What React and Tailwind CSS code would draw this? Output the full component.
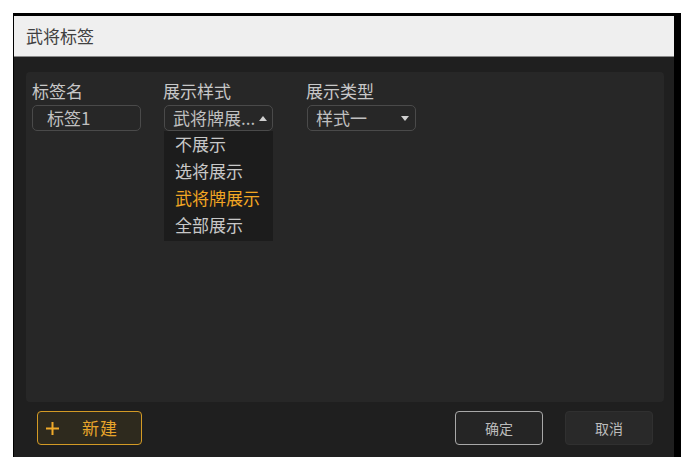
export default function App() {
  const options = ["不展示", "选将展示", "武将牌展示", "全部展示"];
  const font = { fontFamily: '"Noto Sans CJK SC", "Noto Sans", sans-serif' };

  return (
    <div className="h-[471px] w-[694px] bg-white pl-[13px] pt-[13px]" style={font}>
      <div className="flex h-[444px] w-[668px] flex-col border-l border-r-[7px] border-t-[3px] border-black">
        {/* title bar */}
        <div className="flex h-[41px] items-center border-b border-[#8a8a8a] bg-[#efefef] pl-[12px] text-[17px] text-[#404040]">
          武将标签
        </div>

        {/* body */}
        <div className="flex flex-1 flex-col bg-[#1f1f1f] pl-[12px] pr-[10px] pt-[15px]">
          <div className="h-[330px] rounded-[4px] bg-[#272727] pl-[6px] pt-[8px]">
            <div className="flex">
              {/* name */}
              <div className="w-[109px]">
                <div className="text-[17px] leading-[22px] text-[#c8c8c8]">标签名</div>
                <div className="mt-[3px] flex h-[26px] items-center rounded-[5px] border border-[#4a4a4a] pl-[14px] text-[17px] text-[#c0c0c0]">
                  标签1
                </div>
              </div>

              {/* style select (open) */}
              <div className="relative ml-[23px] w-[109px]">
                <div className="-ml-px text-[17px] leading-[22px] text-[#c8c8c8]">展示样式</div>
                <div className="mt-[3px] flex h-[26px] items-center justify-between rounded-[5px] border border-[#4a4a4a] pl-[8px] pr-[5px] text-[17px] text-[#c0c0c0]">
                  <span className="whitespace-nowrap">武将牌展...</span>
                  <svg width="8" height="5" viewBox="0 0 8 5">
                    <path d="M0 5 L4 0 L8 5 Z" fill="#d0d0d0" />
                  </svg>
                </div>
                <div className="absolute left-0 top-[51px] w-[109px] bg-[#1c1c1c] pb-[2px] pl-[11px]">
                  {options.map((o) => (
                    <div
                      key={o}
                      className={
                        "h-[27px] whitespace-nowrap text-[17px] leading-[26px] " +
                        (o === "武将牌展示" ? "text-[#f2a623]" : "text-[#c8c8c8]")
                      }
                    >
                      {o}
                    </div>
                  ))}
                </div>
              </div>

              {/* type select */}
              <div className="ml-[34px] w-[109px]">
                <div className="-ml-px text-[17px] leading-[22px] text-[#c8c8c8]">展示类型</div>
                <div className="mt-[3px] flex h-[26px] items-center justify-between rounded-[5px] border border-[#4a4a4a] pl-[8px] pr-[6px] text-[17px] text-[#c0c0c0]">
                  <span>样式一</span>
                  <svg width="8" height="5" viewBox="0 0 8 5">
                    <path d="M0 0 L8 0 L4 5 Z" fill="#d0d0d0" />
                  </svg>
                </div>
              </div>
            </div>
          </div>

          {/* buttons */}
          <div className="mt-[9px] flex items-center pl-[11px] pr-[11px]">
            <button className="flex h-[34px] w-[105px] items-center rounded-[4px] border border-[#d39a25] bg-[#2e2a1e] pl-[8px] text-[17px] text-[#e8a52a]">
              <svg width="13" height="13" viewBox="0 0 13 13">
                <path d="M6.5 0 V13 M0 6.5 H13" stroke="#f0aa2a" strokeWidth="2" />
              </svg>
              <span className="ml-[23px] tracking-[1px]">新建</span>
            </button>
            <div className="flex-1" />
            <button className="h-[34px] w-[88px] rounded-[4px] border border-[#a8a8a8] bg-[#252525] text-[14px] text-[#bcbcbc]">
              确定
            </button>
            <button className="ml-[22px] h-[34px] w-[88px] rounded-[4px] border border-[#303030] bg-[#292929] text-[14px] text-[#bcbcbc]">
              取消
            </button>
          </div>
        </div>
      </div>
    </div>
  );
}
